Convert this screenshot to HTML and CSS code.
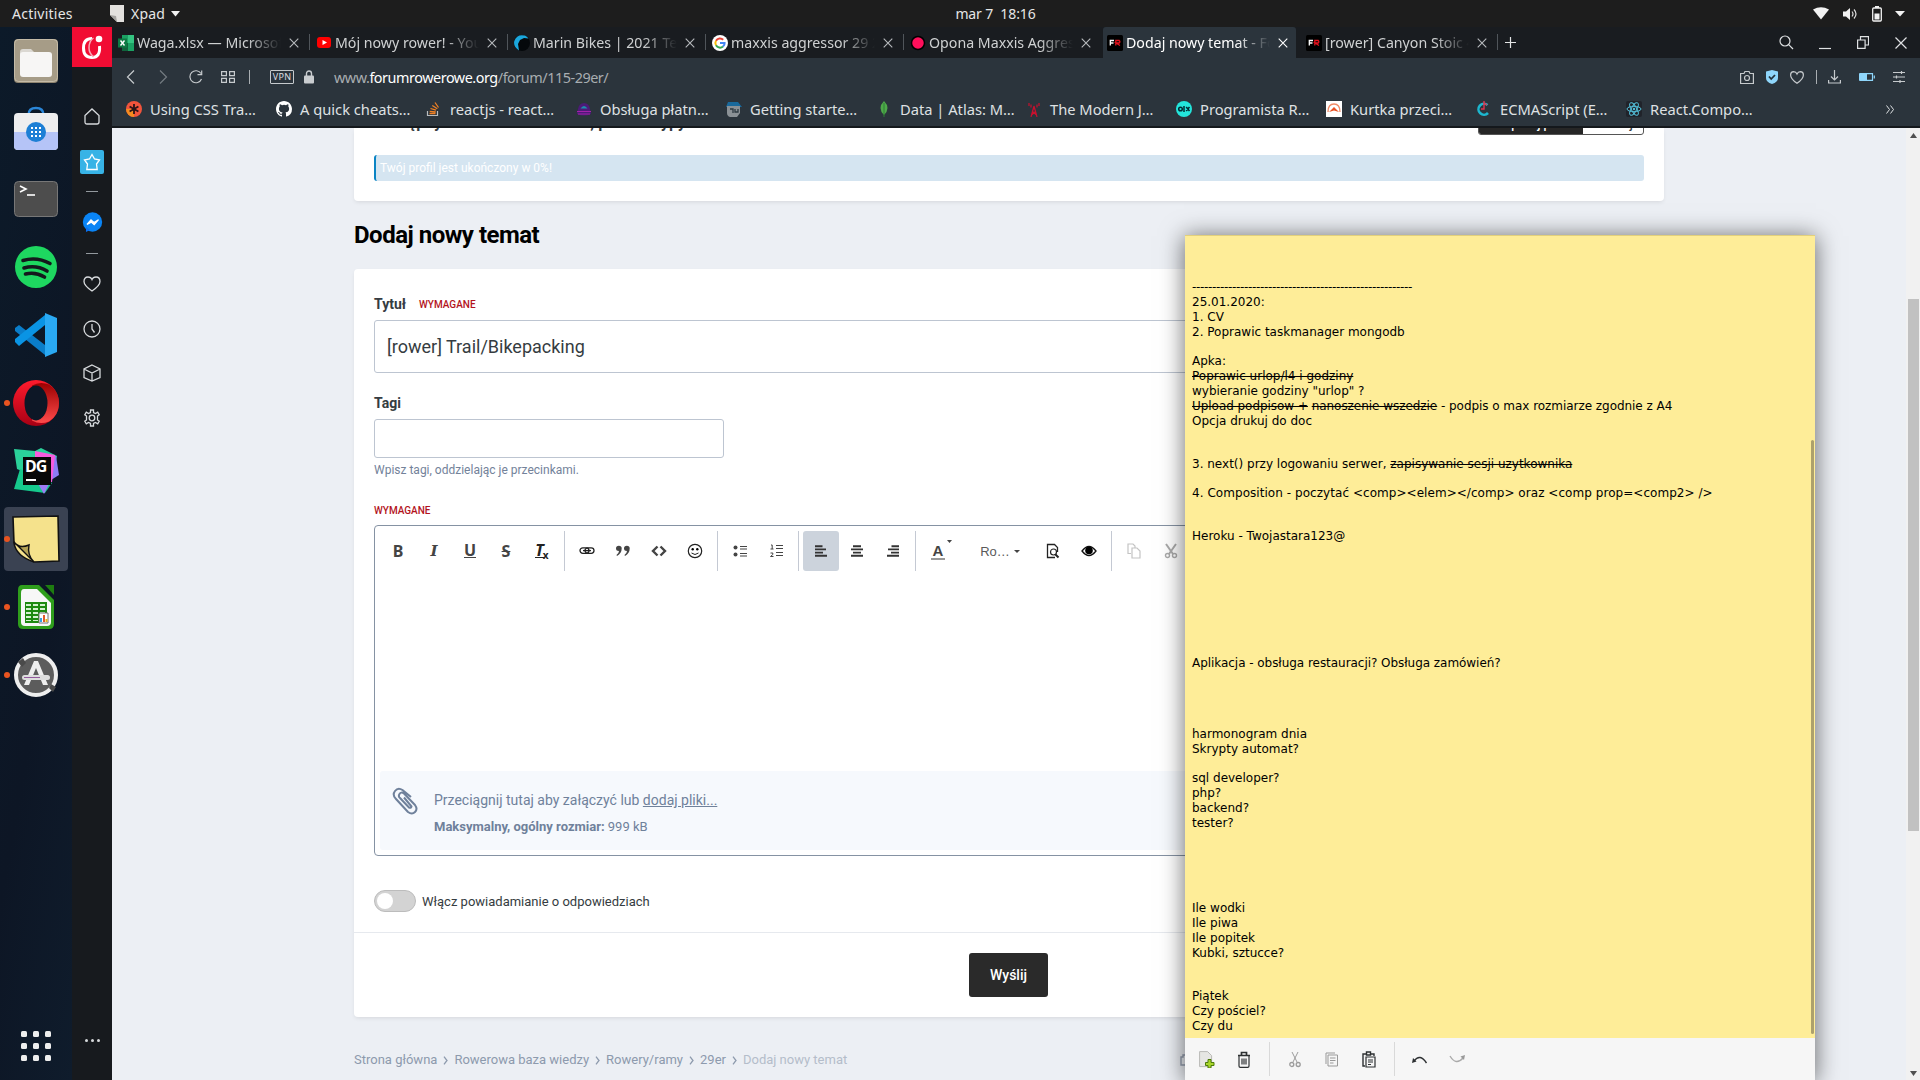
FILE: index.html
```html
<!DOCTYPE html>
<html lang="pl">
<head>
<meta charset="utf-8">
<title>Dodaj nowy temat</title>
<link rel="stylesheet" href="styles.css">
</head>
<body>
<svg class="defs" width="0" height="0">
  <symbol id="close" viewBox="0 0 10 10"><path d="M.7.7l8.6 8.6M9.3.7L.7 9.3" fill="none" stroke="currentColor" stroke-width="1.1"/></symbol>
  <symbol id="fr" viewBox="0 0 16 16"><rect width="16" height="16" rx="1.5" fill="#000"/><path d="M3.3 10.500V5.500H7M3.300 8H6.500" fill="none" stroke="#fff" stroke-width="1.300"/><path d="M8.800 10.500V5.500h3.400q1.300 1.200 0 2.500H9l4 2.500" fill="none" stroke="#e5121d" stroke-width="1.300"/></symbol>
</svg>

<header class="topbar">
  <span class="activities">Activities</span>
  <span class="app-menu">
    <svg width="16" height="19" viewBox="0 0 16 19"><path d="M1 1h14v17H8l-7-7z" fill="#e3e1de"/><path d="M1 11l6 1 1 6z" fill="#a5a3a0"/></svg>
    Xpad
    <svg width="9" height="6" viewBox="0 0 9 6"><path d="M0 0h9L4.500 5.500z" fill="#f2f2f2"/></svg>
  </span>
  <span class="clock">mar 7&nbsp; 18:16</span>
  <span class="tray">
    <svg width="16" height="13" viewBox="0 0 16 13"><path d="M0 2.500Q8-2 16 2.500L8 12.500z" fill="#f2f2f2"/></svg>
    <svg width="16" height="14" viewBox="0 0 16 14"><path d="M1 4.500h3L8 1v12L4 9.500H1z" fill="#f2f2f2"/><path d="M10 4.500q2 2.500 0 5M12 2.500q4 4.500 0 9" fill="none" stroke="#ddd" stroke-width="1.200"/></svg>
    <svg width="12" height="16" viewBox="0 0 12 16"><path d="M4 0h4v2H4z" fill="#f2f2f2"/><rect x="1.700" y="2" width="8.600" height="13" rx="1" fill="none" stroke="#f2f2f2" stroke-width="1.300"/><path d="M3.500 7.500h5v6h-5z" fill="#f2f2f2"/></svg>
    <svg width="10" height="6" viewBox="0 0 10 6"><path d="M0 0h10L5 5.500z" fill="#f2f2f2"/></svg>
  </span>
</header>

<div class="desktop">
  <nav class="dock">
    <div class="dock-item"><svg width="46" height="46" viewBox="0 0 46 46"><rect x="1" y="1" width="44" height="44" rx="4" fill="#8f8571"/><rect x="1.500" y="1.500" width="43" height="42" rx="4" fill="#a69c87" stroke="#cfc6b2" stroke-width=".8"/><path d="M7 14q0-3 3-3h8l4 4h13v6H7z" fill="#dbd8d2"/><rect x="7" y="14" width="32" height="25" rx="3" fill="#f7f6f5"/></svg></div>
    <div class="dock-item"><svg width="46" height="46" viewBox="0 0 46 46"><path d="M15.500 9q0-7 7.500-7t7.500 7" fill="none" stroke="#2a86d8" stroke-width="2.400"/><rect x="1" y="7" width="44" height="37" rx="4" fill="#eeeeef"/><path d="M1 26h44v14q0 4-4 4H5q-4 0-4-4z" fill="#b5c4f7"/><circle cx="23" cy="26" r="10" fill="#1d7fd5"/><path d="M18 21h2v2h-2zM22 21h2v2h-2zM26 21h2v2h-2zM18 25h2v2h-2zM22 25h2v2h-2zM26 25h2v2h-2zM18 29h2v2h-2zM22 29h2v2h-2zM26 29h2v2h-2z" fill="#fff"/></svg></div>
    <div class="dock-item"><svg width="46" height="46" viewBox="0 0 46 46"><rect x="1.500" y="5.500" width="43" height="35" rx="4" fill="#4d4d4d" stroke="#777"/><path d="M7 10l6 3-6 3" fill="none" stroke="#fff" stroke-width="1.600"/><path d="M14 19h8" stroke="#fff" stroke-width="1.600"/></svg></div>
    <div class="dock-item"><svg width="46" height="46" viewBox="0 0 46 46"><circle cx="23" cy="23" r="21" fill="#1ed760"/><path d="M10 16.500q14-4 27 3M11 24q12-3.500 23 3M12.500 30q10-2.500 19 3" fill="none" stroke="#14181c" stroke-width="3.600" stroke-linecap="round"/></svg></div>
    <div class="dock-item"><svg width="46" height="46" viewBox="0 0 46 46"><path d="M2 16l4-3 26 20v10L2 19z" fill="#0a7dc9"/><path d="M2 30l4 4L32 13V3L2 27z" fill="#0a94e4"/><path d="M32 1l12 5v34l-12 5z" fill="#2aa9f3"/></svg></div>
    <div class="dock-item"><i class="running"></i><svg width="46" height="46" viewBox="0 0 46 46"><defs><linearGradient id="op" x2="0" y2="1"><stop stop-color="#ff1b2d"/><stop offset="1" stop-color="#a70014"/></linearGradient><linearGradient id="op2" x2="0" y2="1"><stop stop-color="#9c0000"/><stop offset="1" stop-color="#ff4b4b"/></linearGradient></defs><circle cx="23" cy="23" r="23" fill="url(#op)"/><path d="M19 5.500Q27 1 36 4.500 46 11 46 23T36 41.500Q27 45 19 40.500z" fill="url(#op2)"/><ellipse cx="23" cy="23" rx="11.500" ry="17.500" fill="#0d1726"/></svg></div>
    <div class="dock-item"><svg width="46" height="46" viewBox="0 0 46 46"><path d="M1 1l21 2 6-3 16 8-6 27-34-14z" fill="#2bd19a"/><path d="M30 6l13 2 3 19-16 10z" fill="#8c7df5"/><path d="M22 3l20 4-3 27H22z" fill="#f75bdd"/><path d="M1 41l6-20 32 14-7 10z" fill="#16c98d"/><path d="M24 34h13l-6 12z" fill="#9d7bf5"/><rect x="10" y="9" width="28" height="28" fill="#080808"/><text x="12" y="24" class="dg">DG</text><path d="M13 32h10" stroke="#fff" stroke-width="2"/></svg></div>
    <div class="dock-item active"><i class="running"></i><svg width="48" height="48" viewBox="0 0 48 48"><path d="M1 2l45-1 1 45-25 1Q4 41 2 28z" fill="#f5e28c" stroke="#111" stroke-width="1.600"/><path d="M2 27q5 7 15 3-2 10 5 17Q12 37 2 27z" fill="#b5a355" stroke="#111" stroke-width="1.400"/></svg></div>
    <div class="dock-item"><i class="running"></i><svg width="46" height="46" viewBox="0 0 46 46"><path d="M9 1h17l15 15v24q0 5-5 5H10q-5 0-5-5V6q0-5 4-5z" fill="#2f9e1c"/><path d="M11 5h13l14 14v19q0 4-4 4H12q-4 0-4-4V9q0-4 3-4z" fill="#f7f7f7"/><path d="M32 1h9v10z" fill="#1e7d10"/><path d="M12 18h22v21H12z" fill="#1e8a10"/><path d="M13 20h5v2h-5zM20 20h5v2h-5zM27 20h5v2h-5zM13 24h5v2h-5zM20 24h5v2h-5zM27 24h5v2h-5zM13 28h5v2h-5zM20 28h5v2h-5zM27 28h5v2h-5zM13 32h5v2h-5zM20 32h5v2h-5zM13 36h5v1h-5zM20 36h5v1h-5z" fill="#d3f1ce"/><path d="M26 29h9v10h-9z" fill="#fff" stroke="#777"/><path d="M27 34h2v4h-2z" fill="#38a1e6"/><path d="M30 31h2v7h-2z" fill="#e05a2b"/><path d="M32.500 35h2v3h-2z" fill="#e8b515"/></svg></div>
    <div class="dock-item"><i class="running"></i><svg width="46" height="46" viewBox="0 0 46 46"><circle cx="23" cy="23" r="20" fill="#5c5c5c" stroke="#eee" stroke-width="4"/><path d="M5 10l5-4 3 5-4 4zM36 36l4 4 3-5-5-3z" fill="#4a4a4a"/><path d="M21 9h4l10 24h-5l-7-17-7 17h-5z" fill="#eee"/><rect x="9" y="23" width="28" height="5" rx="2.500" fill="#ddd"/><path d="M11 25.500h16" stroke="#935b9d"/></svg></div>
    <svg class="apps" width="30" height="30" viewBox="0 0 30 30"><g fill="#eee"><rect width="6" height="6" rx="1.500"/><rect x="12" width="6" height="6" rx="1.500"/><rect x="24" width="6" height="6" rx="1.500"/><rect y="12" width="6" height="6" rx="1.500"/><rect x="12" y="12" width="6" height="6" rx="1.500"/><rect x="24" y="12" width="6" height="6" rx="1.500"/><rect y="24" width="6" height="6" rx="1.500"/><rect x="12" y="24" width="6" height="6" rx="1.500"/><rect x="24" y="24" width="6" height="6" rx="1.500"/></g></svg>
  </nav>

  <aside class="sidebar">
    <div class="opera-logo"><svg width="22" height="26" viewBox="0 0 22 26"><path d="M11 4.500Q2.500 4.500 2.500 14T11 23.500 18.500 12" fill="none" stroke="#fff" stroke-width="3"/><path d="M12.500 4Q8 7 8 14q0 5 4.500 9" fill="none" stroke="#f7a8b6" stroke-width="1.500"/><circle cx="18" cy="5" r="3.300" fill="#fff" stroke="none"/></svg></div>
    <div class="side-cell home"><svg width="16" height="17" viewBox="0 0 16 17"><path d="M1 7.500L8 1l7 6.500V14q0 2-2 2H3q-2 0-2-2z"/></svg></div>
    <div class="side-cell"><span class="star"><svg width="18" height="18" viewBox="0 0 18 18"><path d="M9 1.500l2.500 4.500 5 1-3 4 .7 5.500H3.800L4.500 11 1.500 7l5-1z"/></svg></span></div>
    <div class="side-rule"></div>
    <div class="side-cell mess"><svg width="21" height="21" viewBox="0 0 21 21"><circle cx="10.500" cy="10" r="9.700" fill="#0a84f5" stroke="none"/><path d="M4 15v5l4-2z" fill="#0a6ff0" stroke="none"/><path d="M5 12.500l4-4.500 3 2.500 4.500-2.800-4.300 5-3-2.600z" fill="#fff" stroke="#fff"/></svg></div>
    <div class="side-rule"></div>
    <div class="side-cell heart"><svg width="18" height="16" viewBox="0 0 18 16"><path d="M9 15Q1 9.500 1 5.500 1 1 5 1q3 0 4 2.500Q10 1 13 1q4 0 4 4.500 0 4-8 9.500z"/></svg></div>
    <div class="side-cell"><svg width="18" height="18" viewBox="0 0 18 18"><circle cx="9" cy="9" r="8"/><path d="M9 4v5l2.500 3.500"/></svg></div>
    <div class="side-cell cube"><svg width="18" height="18" viewBox="0 0 18 18"><path d="M9 1l8 4v8.500L9 17l-8-3.500V5zM1 5l8 4 8-4M9 9v8"/></svg></div>
    <div class="side-cell gear"><svg width="18" height="18" viewBox="0 0 18 18"><path d="M7.500 1h3v2.500l2 1 2.200-1.300 1.500 2.600L14.500 7v4l1.700 1.200-1.500 2.600-2.200-1.300-2 1V17h-3v-2.500l-2-1-2.200 1.300-1.500-2.600L3.500 11V7L1.800 5.800l1.500-2.600 2.200 1.300 2-1z"/><circle cx="9" cy="9" r="2.800"/></svg></div>
    <div class="side-more"><i></i><i></i><i></i></div>
  </aside>

  <main class="browser">
    <div class="tabs">
      <div class="tab"><svg width="16" height="16" viewBox="0 0 16 16"><path d="M4 0h12v16H4z" fill="#1ba163"/><path d="M10 0h6v8h-6z" fill="#35c481"/><path d="M4 8h6v8H4z" fill="#11633c"/><path d="M0 3.500h9v9H0z" fill="#0d7a43"/><path d="M2.500 5.500l4 5M6.500 5.500l-4 5" stroke="#fff" stroke-width="1.400"/></svg><span>Waga.xlsx — Microsoft Excel</span><svg class="x"><use href="#close"/></svg></div>
      <div class="tab"><svg width="16" height="16" viewBox="0 0 16 16"><rect x="1" y="2" width="14" height="11" rx="3" fill="#f00"/><path d="M6.500 5v5L11 7.500z" fill="#fff"/></svg><span>Mój nowy rower! - YouTube</span><svg class="x"><use href="#close"/></svg></div>
      <div class="tab"><svg width="16" height="16" viewBox="0 0 16 16"><circle cx="8" cy="8" r="8" fill="#05080b"/><path d="M5 15.400Q-1 12 .300 6 3-1.500 11 .600q2 .800 3.500 3L10 3 6 5 4 9z" fill="#1ba7dd"/></svg><span>Marin Bikes | 2021 Team Marin</span><svg class="x"><use href="#close"/></svg></div>
      <div class="tab"><svg width="16" height="16" viewBox="0 0 16 16"><circle cx="8" cy="8" r="8" fill="#fff"/><g fill="none" stroke-width="2"><path d="M11.200 4.700A4.600 4.600 0 0 0 4 5.700" stroke="#ea4335"/><path d="M4 5.700a4.600 4.600 0 0 0 0 4.600" stroke="#fbbc05"/><path d="M4 10.300a4.600 4.600 0 0 0 7 1.200" stroke="#34a853"/><path d="M11 11.500Q12.800 10 12.600 8H8" stroke="#4285f4"/></g></svg><span>maxxis aggressor 29 2.5</span><svg class="x"><use href="#close"/></svg></div>
      <div class="tab last"><svg width="16" height="16" viewBox="0 0 16 16"><circle cx="8" cy="8" r="6.500" fill="#ff0f5b" stroke="#000" stroke-width="1.500"/></svg><span>Opona Maxxis Aggressor</span><svg class="x"><use href="#close"/></svg></div>
      <div class="tab current"><svg width="16" height="16"><use href="#fr"/></svg><span>Dodaj nowy temat - Forum</span><svg class="x"><use href="#close"/></svg></div>
      <div class="tab"><svg width="16" height="16"><use href="#fr"/></svg><span>[rower] Canyon Stoic 4</span><svg class="x"><use href="#close"/></svg></div>
      <svg class="plus" width="11" height="11" viewBox="0 0 11 11"><path d="M5.500 0v11M0 5.500h11" stroke="#e3e5e6" stroke-width="1.200"/></svg>
      <div class="window-buttons">
        <svg width="15" height="15" viewBox="0 0 15 15"><circle cx="6" cy="6" r="5"/><path d="M9.700 9.700L14 14"/></svg>
        <svg width="12" height="15" viewBox="0 0 12 15"><path d="M0 13.500h12"/></svg>
        <svg width="12" height="13" viewBox="0 0 12 13"><path d="M.600 4h7.500v8.400H.600zM3.500 4V.600h8V9H8"/></svg>
        <svg width="12" height="12" viewBox="0 0 12 12"><path d="M.500.500l11 11M11.500.500l-11 11"/></svg>
      </div>
    </div>

    <div class="toolbar">
      <div class="nav-buttons">
        <svg width="9" height="14" viewBox="0 0 9 14"><path d="M8 .500L1.500 7 8 13.500"/></svg>
        <svg class="dim" width="9" height="14" viewBox="0 0 9 14"><path d="M1 .500L7.500 7 1 13.500"/></svg>
        <svg width="14" height="14" viewBox="0 0 14 14"><path d="M12.500 9A6 6 0 1 1 12 3.500M12.700.500v4.200H8.500"/></svg>
        <svg width="14" height="12" viewBox="0 0 14 12"><path d="M.600.600h4.800v4H.600zM8.600.600h4.800v4H8.600zM.600 7.400h4.800v4H.600zM8.600 7.400h4.800v4H8.600z"/></svg>
        <i class="bar"></i>
      </div>
      <span class="vpn">VPN</span>
      <svg class="lock" width="10" height="14" viewBox="0 0 10 14"><path d="M2.500 6V3.500a2.500 2.500 0 0 1 5 0V6" fill="none" stroke="#c9cccf" stroke-width="1.400"/><rect y="5.500" width="10" height="8" rx="1" fill="#c9cccf"/></svg>
      <span class="url">www.<b>forumrowerowe.org</b>/forum/115-29er/</span>
      <div class="page-actions">
        <svg width="14" height="13" viewBox="0 0 14 13"><path d="M.600 2.500H4l1-2h4l1 2h3.400v10H.600z"/><circle cx="7" cy="7" r="2.500"/></svg>
        <svg width="12" height="14" viewBox="0 0 12 14"><path class="fillblue" d="M0 1.500L6 0l6 1.500V8q0 4-6 6Q0 12 0 8z"/><path class="tick" d="M3 6.500l2.200 2.500L9 5"/></svg>
        <svg width="14" height="13" viewBox="0 0 14 13"><path d="M7 12.300Q.600 8 .600 4 .600.800 3.600.600 6 .600 7 3 8 .600 10.400.600q3 .200 3 3.400 0 4-6.400 8.300z"/></svg>
        <i class="bar"></i>
        <svg class="down" width="13" height="14" viewBox="0 0 13 14"><path d="M6.500 0v9.500M3 6.500L6.500 10 10 6.500M.600 10v3h11.800v-3"/></svg>
        <svg class="batt" width="16" height="8" viewBox="0 0 16 8"><path class="fillblue" d="M0 1q0-1 1-1h7v8H1Q0 8 0 7z"/><path class="lineblue" d="M8 .600h5.500v6.800H8M15.300 2.500v3"/></svg>
        <svg class="slid" width="12" height="12" viewBox="0 0 12 12"><path d="M0 1.500h12M0 6h12M0 10.500h12M8.500 0v3M3.500 4.500v3M7 9v3"/></svg>
      </div>
    </div>

    <div class="bookmarks">
      <div class="bm"><svg width="16" height="16" viewBox="0 0 16 16"><circle cx="8" cy="8" r="8" fill="#f1543c"/><path d="M8 16A8 8 0 0 1 0 8l8 0z" fill="#f58b1f"/><path d="M8 3v10M3.600 5.500l8.800 5M12.400 5.500l-8.800 5" stroke="#2a1518" stroke-width="1.800"/></svg>Using CSS Tra…</div>
      <div class="bm"><svg width="16" height="16" viewBox="0 0 16 16"><path fill="#fff" d="M8 0C3.580 0 0 3.580 0 8c0 3.540 2.290 6.530 5.470 7.590.4.070.55-.17.55-.38 0-.19-.01-.82-.01-1.490-2.010.37-2.530-.49-2.690-.94-.09-.23-.48-.94-.82-1.130-.28-.15-.68-.52-.01-.53.63-.01 1.080.58 1.230.82.72 1.210 1.870.87 2.330.66.07-.52.28-.87.510-1.070-1.780-.2-3.640-.89-3.640-3.950 0-.87.31-1.590.82-2.150-.08-.2-.36-1.020.08-2.120 0 0 .67-.21 2.200.82a7.600 7.600 0 0 1 4 0c1.530-1.040 2.200-.82 2.200-.82.44 1.100.16 1.920.08 2.120.51.56.82 1.270.82 2.150 0 3.070-1.870 3.750-3.650 3.950.29.25.54.73.54 1.480 0 1.070-.01 1.930-.01 2.200 0 .21.15.46.55.38A8 8 0 0 0 16 8c0-4.420-3.580-8-8-8z"/></svg>A quick cheats…</div>
      <div class="bm"><svg width="16" height="16" viewBox="0 0 16 16"><path d="M1.500 10v4.500h10V10" fill="none" stroke="#b9bcbe" stroke-width="1.200"/><path d="M3.500 12.500h6M3.700 10.300l6 .7M4.500 7.500l5.500 1.700M6.300 4.500l5 3.200M9 1.500l3.500 5" stroke="#f08024" stroke-width="1.300"/></svg>reactjs - react…</div>
      <div class="bm"><svg width="16" height="16" viewBox="0 0 16 16"><path d="M2 8q1-6 6-6t6 6l1 5q-7 3-14 0z" fill="#4d1a78"/><path d="M4.500 7.500q3.500-5 7 0z" fill="#1b8fae"/><path d="M1 10.500h14M2 13h12" fill="none" stroke="#a321a8" stroke-width="1.200"/></svg>Obsługa płatn…</div>
      <div class="bm"><svg width="16" height="16" viewBox="0 0 16 16"><path d="M2 1h10l4 5H0z" fill="#19699c"/><path d="M1 5h13v7l-3 4H4q-3-1-3-4z" fill="#8b9196"/><path d="M4 8h3v4M9 8v3h3V8" fill="none" stroke="#2e3a42" stroke-width="1.300"/></svg>Getting starte…</div>
      <div class="bm"><svg width="16" height="16" viewBox="0 0 16 16"><path d="M8 0q7 7 0 14Q1 7 8 0z" fill="#4fa94a"/><path d="M8 2v14" stroke="#2f7f35"/></svg>Data | Atlas: M…</div>
      <div class="bm"><svg width="16" height="16" viewBox="0 0 16 16"><path d="M8 5l-3 11M8 5l3 11M6 10l4.500 4M10 10l-4.500 4M7 8h2M5 3.500v3M3 2v3M11 3.500v3M13 2v3" fill="none" stroke="#c8102e" stroke-width="1.200"/></svg>The Modern J…</div>
      <div class="bm"><svg width="16" height="16" viewBox="0 0 16 16"><circle cx="8" cy="8" r="8" fill="#23e5db"/><circle cx="4.500" cy="8" r="1.800" fill="none" stroke="#022b33" stroke-width="1.500"/><path d="M8 5v6M10.200 6l3.300 4M13.500 6l-3.300 4" stroke="#022b33" stroke-width="1.500"/></svg>Programista R…</div>
      <div class="bm"><svg width="16" height="16" viewBox="0 0 16 16"><path d="M0 0h16v16H0z" fill="#fff"/><path d="M2 11Q2 3 8 3t6 8" fill="none" stroke="#f08a66" stroke-width="1.300"/><path d="M3 11l5-5 5 5-5-1.500z" fill="#e85124"/></svg>Kurtka przeci…</div>
      <div class="bm"><svg width="16" height="16" viewBox="0 0 16 16"><path d="M11.500 4A5.500 5.500 0 1 0 12 12" fill="none" stroke="#1cb7cf" stroke-width="2.600"/><path d="M8 0v8H5M8 2l3 2" fill="none" stroke="#e0344d" stroke-width="1.400"/></svg>ECMAScript (E…</div>
      <div class="bm"><svg width="16" height="16" viewBox="0 0 16 16"><rect width="16" height="16" rx="2" fill="#20232a"/><g fill="none" stroke="#53bfd9"><ellipse cx="8" cy="8" rx="7" ry="2.700"/><ellipse cx="8" cy="8" rx="7" ry="2.700" transform="rotate(60 8 8)"/><ellipse cx="8" cy="8" rx="7" ry="2.700" transform="rotate(120 8 8)"/></g><circle cx="8" cy="8" r="1.200" fill="#53bfd9"/></svg>React.Compo…</div>
      <svg class="more" width="8" height="9" viewBox="0 0 8 9"><path d="M.500.500l3 4-3 4M4.500.500l3 4-3 4" fill="none" stroke="#dfe1e3"/></svg>
    </div>

    <div class="viewport">
      <div class="page">
        <section class="card profile">
          <div class="profile-head">
            <strong>Następny krok: Dane kontaktu, podane typy</strong>
            <div class="split"><span class="dark">Uzupełnij profil</span><span>Później</span></div>
          </div>
          <div class="progress">Twój profil jest ukończony w 0%!</div>
        </section>
        <h1>Dodaj nowy temat</h1>
        <section class="card form">
          <div class="fields">
            <label class="lbl">Tytuł <em>WYMAGANE</em></label>
            <div class="input title-input">[rower] Trail/Bikepacking</div>
            <label class="lbl tags-lbl">Tagi</label>
            <div class="input tags-input"></div>
            <p class="hint">Wpisz tagi, oddzielając je przecinkami.</p>
            <em class="req">WYMAGANE</em>
            <div class="editor">
              <div class="ed-bar">
                <span class="eb"><b class="g">B</b></span><span class="eb"><b class="g it">I</b></span><span class="eb"><b class="g un">U</b></span><span class="eb"><b class="g st">S</b></span><span class="eb"><b class="g tx">T</b><small>x</small></span><i></i>
                <span class="eb"><svg width="16" height="10" viewBox="0 0 16 10"><g fill="none" stroke="#222" stroke-width="1.300"><rect x="1" y="1.800" width="9" height="5.600" rx="2.800"/><rect x="6" y="1.800" width="9" height="5.600" rx="2.800"/><path d="M4 4.600h8"/></g></svg></span>
                <span class="eb"><svg width="16" height="12" viewBox="0 0 16 12"><path d="M1 3.500a2.800 2.800 0 0 1 5.700 0Q6.700 8 2 11l-.500-1Q4 8 4 6 1 6 1 3.500zM9 3.500a2.800 2.800 0 0 1 5.700 0q0 4.500-4.700 7.500l-.500-1Q12 8 12 6 9 6 9 3.500z" fill="#444"/></svg></span>
                <span class="eb"><svg width="16" height="12" viewBox="0 0 16 12"><path d="M6.500 1.500L2 6l4.500 4.500M9.500 1.500L14 6l-4.500 4.500" fill="none" stroke="#444" stroke-width="2.400"/></svg></span>
                <span class="eb"><svg width="16" height="16" viewBox="0 0 16 16"><circle cx="8" cy="8" r="6.700" fill="none" stroke="#222" stroke-width="1.200"/><circle cx="5.700" cy="6.300" r="1.200"/><circle cx="10.300" cy="6.300" r="1.200"/><path d="M4.500 10q3.500 3 7 0" fill="none" stroke="#222"/></svg></span><i></i>
                <span class="eb"><svg width="14" height="12" viewBox="0 0 14 12"><circle cx="2.500" cy="2.500" r="2" fill="#444"/><circle cx="2.500" cy="9.500" r="2" fill="#444"/><path d="M7 1.500h7M7 4h7M7 8.500h7M7 11h7" stroke="#444" stroke-width="1.100"/></svg></span>
                <span class="eb"><svg width="14" height="14" viewBox="0 0 14 14"><path d="M2 1h1.200v4M1.500 5h3M1.500 9h2.300v1.500L1.500 12.500h3" fill="none" stroke="#444"/><path d="M7 1.500h7M7 4.500h7M7 8.500h7M7 11.500h7" stroke="#444" stroke-width="1.100"/></svg></span><i></i>
                <span class="eb on"><svg width="12" height="12" viewBox="0 0 12 12"><path d="M0 1.200h7.500M0 4.400h11M0 7.600h8M0 10.800h12" stroke="#333" stroke-width="1.900"/></svg></span>
                <span class="eb"><svg width="12" height="12" viewBox="0 0 12 12"><path d="M2 1.200h8M0 4.400h12M2 7.600h8M0 10.800h12" stroke="#333" stroke-width="1.900"/></svg></span>
                <span class="eb"><svg width="12" height="12" viewBox="0 0 12 12"><path d="M4.500 1.200H12M1 4.400h11M4 7.600h8M0 10.800h12" stroke="#333" stroke-width="1.900"/></svg></span><i></i>
                <span class="eb color"><b class="g ca">A</b><svg width="5" height="3" viewBox="0 0 5 3"><path d="M0 0h5L2.500 3z" fill="#444"/></svg></span>
                <span class="eb size">Ro…<svg width="6" height="3" viewBox="0 0 6 3"><path d="M0 0h6L3 3z" fill="#444"/></svg></span>
                <span class="eb"><svg width="14" height="16" viewBox="0 0 14 16"><path d="M9 14.500H1.500v-13h7l3 3V9" fill="none" stroke="#222" stroke-width="1.300"/><circle cx="7.500" cy="9" r="3" fill="none" stroke="#222" stroke-width="1.200"/><path d="M9.500 11.500l3 3" stroke="#222" stroke-width="2"/></svg></span>
                <span class="eb"><svg width="16" height="12" viewBox="0 0 16 12"><path d="M1 6q7-9 14 0-7 9-14 0z" fill="#fff" stroke="#111" stroke-width="1.300"/><circle cx="8" cy="5.500" r="3.800"/></svg></span><i></i>
                <span class="eb"><svg width="14" height="16" viewBox="0 0 14 16"><path d="M4 10.500H1V1h5l2 2v2M5 5h5l3 3v7H5z" fill="none" stroke="#c4c4c4" stroke-width="1.200"/></svg></span>
                <span class="eb cut"><svg width="14" height="16" viewBox="0 0 14 16"><path d="M2 1l7 10M12 1L5 11" stroke="#aaa" stroke-width="2"/><g fill="none" stroke="#aaa" stroke-width="1.400"><circle cx="3.500" cy="12.500" r="2"/><circle cx="10.500" cy="12.500" r="2"/></g></svg></span>
              </div>
              <div class="attach">
                <svg width="26" height="28" viewBox="0 0 26 28"><path d="M19 10L10.500 3Q6 0 3 4t1 8l12 13q4 3 7 0t0-7L12 6.500Q9 4.500 7.500 7t.5 4l9 9.500q2 1 2.500-1L12 10.500" fill="none" stroke="#6f819b" stroke-width="2" stroke-linejoin="round"/></svg>
                <div><p class="drop">Przeciągnij tutaj aby załączyć lub <u>dodaj pliki...</u></p><p class="max"><b>Maksymalny, ogólny rozmiar:</b> 999 kB</p></div>
              </div>
            </div>
            <div class="follow"><span class="switch"></span>Włącz powiadamianie o odpowiedziach</div>
          </div>
          <div class="submit"><span>Wyślij</span></div>
        </section>
        <div class="crumbs">
          <span>Strona główna</span><svg class="ch"><path d="M1 .700l3 3.800-3 3.800"/></svg><span>Rowerowa baza wiedzy</span><svg class="ch"><path d="M1 .700l3 3.800-3 3.800"/></svg><span>Rowery/ramy</span><svg class="ch"><path d="M1 .700l3 3.800-3 3.800"/></svg><span>29er</span><svg class="ch"><path d="M1 .700l3 3.800-3 3.800"/></svg><span class="cur">Dodaj nowy temat</span>
          <svg class="feed" width="14" height="12" viewBox="0 0 14 12"><path d="M3 1h10v10H1V3h2zM5 4h6M5 6h6M5 8h6" fill="none" stroke="#97a1b2" stroke-width="1.400"/></svg>
        </div>
      </div>
      <div class="scrollbar"><svg width="7" height="5" viewBox="0 0 7 5"><path d="M0 5h7L3.500 0z" fill="#505050"/></svg><i></i><svg width="7" height="5" viewBox="0 0 7 5"><path d="M0 0h7L3.500 5z" fill="#505050"/></svg></div>
    </div>
  </main>
</div>

<section class="note">
  <div class="note-text">
    <p></p><p></p><p></p>
    <p class="dashes">-------------------------------------------------------</p>
    <p>25.01.2020:</p><p>1. CV</p><p>2. Poprawic taskmanager mongodb</p><p></p>
    <p>Apka:</p><p><s>Poprawic urlop/l4 i godziny</s></p><p>wybieranie godziny "urlop" ?</p>
    <p class="tight"><s>Upload podpisow +</s> <s>nanoszenie wszedzie</s> - podpis o max rozmiarze zgodnie z A4</p>
    <p>Opcja drukuj do doc</p><p></p><p></p>
    <p>3. next() przy logowaniu serwer, <s>zapisywanie sesji uzytkownika</s></p><p></p>
    <p class="wide">4. Composition - poczytać &lt;comp&gt;&lt;elem&gt;&lt;/comp&gt; oraz &lt;comp prop=&lt;comp2&gt; /&gt;</p><p></p><p></p>
    <p>Heroku - Twojastara123@</p><p></p><p></p><p></p><p></p><p></p><p></p><p></p><p></p>
    <p class="tight">Aplikacja - obsługa restauracji? Obsługa zamówień?</p><p></p><p></p><p></p><p></p>
    <p>harmonogram dnia</p><p>Skrypty automat?</p><p></p>
    <p>sql developer?</p><p>php?</p><p>backend?</p><p>tester?</p><p></p><p></p><p></p><p></p><p></p>
    <p>Ile wodki</p><p>Ile piwa</p><p>Ile popitek</p><p>Kubki, sztucce?</p><p></p><p></p>
    <p>Piątek</p><p>Czy pościel?</p><p>Czy du</p>
    <i class="note-scroll"></i>
  </div>
  <div class="note-bar">
    <span><svg width="16" height="17" viewBox="0 0 16 17"><path d="M.600.600h8l4 4v11H.600z" fill="#e6e6e3" stroke="#b9b9b5"/><path d="M9 8.500h3v3h3v3h-3v2.500H9v-2.500H6.500v-3H9z" fill="#a9d62b" stroke="#4c7a0b"/></svg></span>
    <span><svg width="14" height="17" viewBox="0 0 14 17"><path d="M1 4.500h12M4.500 4V1.500h5V4" fill="none" stroke="#2d3032" stroke-width="1.700"/><path d="M2 5v10q0 1.300 1.300 1.300h7.400Q12 16.300 12 15V5M5 7.500v6M7 7.500v6M9 7.500v6" fill="none" stroke="#2d3032" stroke-width="1.200"/></svg></span>
    <i></i>
    <span><svg width="12" height="17" viewBox="0 0 12 17"><path d="M3 1l5 10M9 1L4 11" stroke="#9c9c9c"/><circle cx="2.800" cy="13.500" r="2" fill="none" stroke="#9c9c9c" stroke-width="1.300"/><circle cx="9.200" cy="13.500" r="2" fill="none" stroke="#9c9c9c" stroke-width="1.300"/></svg></span>
    <span><svg width="14" height="15" viewBox="0 0 14 15"><path d="M1 12V1h9M3 3h9.500v11H3zM5 6h5.500M5 8.500h5.500M5 11h3.500" fill="none" stroke="#999"/></svg></span>
    <span><svg width="14" height="17" viewBox="0 0 14 17"><path d="M3 15H1V3h3M9 3h3v2M4.500 1h4v3h-4z" fill="none" stroke="#2d3032" stroke-width="1.400"/><path d="M4 6h9v10H4zM6 9h5M6 11h5M6 13.500h3" fill="none" stroke="#2d3032" stroke-width="1.200"/></svg></span>
    <i></i>
    <span><svg width="16" height="9" viewBox="0 0 16 9"><path d="M2 6Q8-2 14.500 8" fill="none" stroke="#2d3032" stroke-width="1.400"/><path d="M0 8l1-5 3.500 3.500z" fill="#2d3032"/></svg></span>
    <span><svg width="16" height="9" viewBox="0 0 16 9"><path d="M1 1q6 10 13 2" fill="none" stroke="#aaa" stroke-width="1.400"/><path d="M16 0l-1 5-3.500-3.500z" fill="#999"/></svg></span>
  </div>
</section>
</body>
</html>
```
FILE: styles.css
```css
* { box-sizing: border-box; }
body { margin: 0; width: 1920px; height: 1080px; overflow: hidden; position: relative; background: #0d1726; font-family: "Noto Sans", "Open Sans", sans-serif; }
svg { display: block; flex: none; }
p, h1 { margin: 0; }
.defs { position: absolute; }

/* GNOME top bar */
.topbar { height: 27px; background: #1d1d1d; color: #e6e6e6; font-size: 14px; display: grid; grid-template-columns: 1fr auto 1fr; align-items: center; padding: 0 15px 0 12px; line-height: 26px; }
.activities { grid-column: 1; grid-row: 1; letter-spacing: .25px; }
.app-menu { grid-column: 1; grid-row: 1; margin-left: 97px; display: flex; align-items: center; gap: 6px; letter-spacing: .2px; }
.clock { grid-column: 2; grid-row: 1; padding-left: 74px; letter-spacing: -.1px; }
.tray { grid-column: 3; grid-row: 1; display: flex; justify-content: flex-end; align-items: center; gap: 13px; }
.tray svg:nth-child(3) { margin-right: -1px; }

.desktop { display: flex; height: 1053px; }

/* dock */
.dock { width: 72px; flex: none; background: linear-gradient(100deg, #0c1a29, #0d1625 60%, #0f1c2c); display: flex; flex-direction: column; align-items: center; padding: 2px 0 19px; }
.dock-item { width: 64px; height: 64px; margin-bottom: 4px; border-radius: 4px; display: flex; align-items: center; justify-content: center; position: relative; }
.dock-item:nth-child(3) { margin-top: 2px; }
.dock-item.active { background: #3a4252; }
.running { position: absolute; left: 0; top: 29px; width: 6px; height: 6px; border-radius: 50%; background: #e95420; }
.dg { font: bold 16px "Noto Sans", sans-serif; fill: #fff; letter-spacing: -1px; }
.apps { margin-top: auto; }

/* browser side panel */
.sidebar { width: 40px; flex: none; background: #171a1e; display: flex; flex-direction: column; align-items: center; }
.sidebar svg { fill: none; stroke: #d6d9dc; stroke-width: 1.300; }
.opera-logo { width: 40px; height: 40px; background: #f10c33; display: flex; align-items: center; justify-content: center; }
.side-cell { height: 45px; width: 40px; display: flex; align-items: center; justify-content: center; }
.side-cell.home { margin-top: 27px; }
.star { width: 24px; height: 24px; border-radius: 2px; background: #37b3e6; display: flex; align-items: center; justify-content: center; }
.star svg { stroke: #fff; }
.side-rule { width: 12px; height: 1px; background: #93999e; margin: 7px 0; }
.side-cell.mess { height: 47px; }
.side-cell.cube { height: 44px; }
.side-cell.gear { height: 46px; }
.side-more { margin-top: auto; padding-bottom: 38px; display: flex; gap: 3px; }
.side-more i { width: 3px; height: 3px; border-radius: 50%; background: #d6d9dc; }

/* browser chrome */
.browser { flex: 1; display: flex; flex-direction: column; background: #2b343c; color: #dcdfe1; }
.tabs { height: 31px; background: #191c20; display: flex; align-items: center; }
.tab { width: 198px; height: 31px; flex: none; display: flex; align-items: center; padding: 0 11px 0 6px; gap: 3px; position: relative; color: #cfd1d2; font-size: 14.2px; }
.tab::after { content: ""; width: 1px; height: 16px; background: #50555a; position: absolute; right: 0; top: 7px; }
.tab.last::after, .tab.current::after { display: none; }
.tab.current { background: #2b343c; color: #fff; border-radius: 3px 3px 0 0; margin-left: 1px; width: 193px; padding: 0 8px 0 4px; }
.tab.current + .tab { padding-left: 10px; width: 202px; }
.tab span { flex: 1; overflow: hidden; white-space: nowrap; line-height: 31px; margin-right: 5px; mask-image: linear-gradient(90deg, #000 calc(100% - 34px), transparent); }
.tab .x { width: 10px; height: 10px; color: #b7babd; }
.tab.current .x { color: #fff; }
.plus { margin-left: 7px; }
.window-buttons { margin-left: auto; display: flex; align-items: center; gap: 26px; padding-right: 13px; }
.window-buttons svg { fill: none; stroke: #dfe1e3; stroke-width: 1.200; }
.window-buttons svg:first-child { margin-right: -1px; }

.toolbar { height: 38px; display: flex; align-items: center; padding: 0 15px 0 14px; }
.nav-buttons { display: flex; align-items: center; gap: 23px; width: 144px; }
.nav-buttons svg, .page-actions svg { fill: none; stroke: #c6cacd; stroke-width: 1.200; }
.page-actions svg .fillblue { fill: #8fd6fb; stroke: none; }
.page-actions svg .lineblue { stroke: #8fd6fb; }
.page-actions svg .tick { stroke: #24323b; stroke-width: 1.800; }
.nav-buttons svg:nth-child(2) { margin-left: 1px; }
.nav-buttons svg:nth-child(3) { margin-right: -5px; margin-left: -2px; }
.nav-buttons .dim { stroke: #747b81; }
.bar { width: 1px; height: 14px; background: #a9aeb2; }
.nav-buttons .bar { margin-left: -9px; }
.vpn { flex: none; margin-right: 10px; border: 1px solid #c6cacd; border-radius: 1px; width: 24px; height: 14px; font-size: 9px; line-height: 12px; text-align: center; letter-spacing: .3px; }
.url { margin-left: 20px; font-size: 14.400px; color: #a8adb1; letter-spacing: -.46px; }
.url b { font-weight: 400; color: #fff; }
.page-actions { margin-left: auto; display: flex; align-items: center; gap: 12px; }
.page-actions .down { margin-left: -1px; }
.page-actions .batt { margin-left: 6px; }
.page-actions .slid { margin-left: 6px; }

.bookmarks { height: 32px; display: flex; align-items: center; padding: 0 0 4px 14px; border-bottom: 2px solid #14181c; }
.bm { width: 150px; display: flex; align-items: center; gap: 8px; font-size: 14.700px; white-space: nowrap; color: #dfe1e3; line-height: 20px; }
.more { margin-left: auto; margin-right: 26px; }

/* forum page */
.viewport { flex: 1; min-height: 0; display: flex; background: #eceff4; overflow: hidden; font-family: Roboto, sans-serif; }
.page { width: 1310px; margin-left: 242px; color: #353c41; }
.card { background: #fff; border-radius: 4px; box-shadow: 0 2px 4px -1px rgba(0,0,0,.1); }
.profile { height: 73px; overflow: hidden; border-radius: 0 0 4px 4px; padding: 0 20px; }
.profile-head { height: 7px; display: flex; justify-content: space-between; align-items: flex-end; font-size: 16px; }
.profile-head strong { line-height: 19px; margin-bottom: 3px; }
.split { display: flex; width: 166px; height: 30px; border: 1px solid #555; border-radius: 3px; overflow: hidden; font-size: 12px; line-height: 37px; text-align: center; font-weight: 500; }
.split span { flex: 1; }
.split .dark { flex: none; width: 104px; background: #262626; color: #fff; }
.progress { margin-top: 20px; height: 26px; background: #d5e5f1; border-left: 2px solid #0a84c4; border-radius: 3px; color: #fff; font-size: 12px; line-height: 26px; padding-left: 4px; }
h1 { font-size: 24px; line-height: 28px; margin: 20px 0; color: #000; font-weight: 700; letter-spacing: -.5px; }
.form { height: 748px; }
.fields { padding: 26px 20px 0; height: 663px; }
.lbl { display: flex; align-items: center; font-size: 14px; line-height: 18px; font-weight: 700; gap: 13px; }
.lbl em, .req { font: 500 10px/18px Roboto, sans-serif; color: #b3131c; }
.lbl em { line-height: 16px; padding-top: 2px; }
.input { border: 1px solid #bdc5d1; border-radius: 3px; }
.title-input { height: 53px; margin-top: 7px; padding-left: 12px; font-size: 18px; line-height: 52px; }
.tags-lbl { margin-top: 21px; }
.tags-input { height: 39px; width: 350px; margin-top: 7px; }
.hint { font-size: 12px; line-height: 16px; color: #73829a; margin-top: 4px; }
.req { display: block; margin-top: 24px; }
.editor { margin-top: 5px; height: 331px; border: 1px solid #8592a3; border-radius: 4px; padding: 5px; display: flex; flex-direction: column; justify-content: space-between; }
.ed-bar { display: flex; height: 40px; white-space: nowrap; overflow: hidden; }
.ed-bar i { width: 1px; background: #c4c9d3; margin: 0 4px; flex: none; }
.eb { width: 36px; height: 40px; flex: none; display: flex; align-items: center; justify-content: center; border-radius: 3px; }
.eb.on { background: #ccd3dc; }
.eb.cut { padding-left: 2px; }
.g { font: bold 16px/15px "Noto Sans", sans-serif; color: #444; }
.it { font-family: "DejaVu Serif", serif; font-style: italic; font-size: 15px; }
.un { border-bottom: 1px solid #444; line-height: 13px; }
.st { text-decoration: line-through; }
.tx { border-bottom: 1px solid #222; color: #222; font-style: italic; line-height: 13px; }
.eb small { font: bold 10px/10px "Noto Sans", sans-serif; align-self: flex-end; margin-bottom: 11px; margin-left: -1px; color: #222; }
.ca { border-bottom: 2px solid #999; padding: 0 2px; font-family: "Liberation Sans", sans-serif; font-size: 15px; }
.color svg { margin: -20px 0 0 2px; }
.color { padding-left: 7px; }
.size { width: 79px; font: 13px "Liberation Sans", sans-serif; color: #5a5a5a; gap: 4px; padding-left: 9px; }
.attach { height: 79px; background: #f6f9fd; border-radius: 3px; padding: 16px 12px 0; display: flex; gap: 16px; color: #6f819b; }
.attach p { line-height: 26px; }
.drop { font-size: 14px; }
.attach .max { font-size: 13px; margin-top: 1px; }
.follow { display: flex; align-items: center; gap: 6px; margin-top: 34px; font-size: 13px; }
.switch { width: 42px; height: 22px; border-radius: 11px; background: #d3d3d3; border: 1px solid #bcbcbc; padding: 2px; }
.switch::before { content: ""; display: block; width: 16px; height: 16px; border-radius: 50%; background: #fff; }
.submit { border-top: 1px solid #e6e9ee; padding: 20px 1px 0 0; display: flex; justify-content: center; }
.submit span { width: 79px; height: 44px; background: #2a2a2a; border-radius: 3px; color: #fff; font-size: 14px; font-weight: 500; line-height: 44px; text-align: center; }
.crumbs { display: flex; align-items: center; margin-top: 35px; font-size: 13px; line-height: 16px; color: #8d9aad; }
.ch { width: 5px; height: 9px; margin: 0 6px; fill: none; stroke: #8d9aad; stroke-width: 1.300; }
.cur { color: #b4bdca; }
.feed { margin-left: 333px; }
.scrollbar { margin-left: auto; width: 14px; background: #f1f1f1; display: flex; flex-direction: column; align-items: center; padding: 5px 0 4px; }
.scrollbar i { width: 11px; height: 532px; margin: 161px 0 auto; background: #c1c1c1; }

/* sticky note window lying over the browser */
.note { position: absolute; left: 1185px; top: 235px; width: 630px; height: 845px; display: flex; flex-direction: column; box-shadow: 0 2px 22px 1px rgba(0,0,0,.55); border-top: 1px solid #e2d07c; }
.note-text { flex: 1; background: #feed98; padding: 2px 7px 0; font: 12px/15px "DejaVu Sans", sans-serif; color: #000; position: relative; }
.note-text p { height: 15px; white-space: pre; }
.note-text p:empty { height: 14px; }
.note-text .tight { letter-spacing: -.045px; }
.note-text .wide { letter-spacing: .05px; }
.dashes { letter-spacing: -.33px; }
.note-scroll { position: absolute; right: 1px; top: 204px; width: 3px; height: 594px; background: #ada16c; border-radius: 2px; }
.note-bar { height: 42px; background: #f6f6f6; display: flex; align-items: center; padding-left: 3px; }
.note-bar span { width: 37px; display: flex; justify-content: center; }
.note-bar i { width: 1px; height: 34px; background: #d9d9d9; margin: 0 6px 0 7px; }
```
